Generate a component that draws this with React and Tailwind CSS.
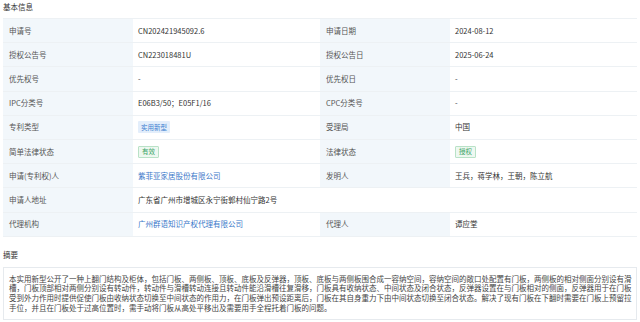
import React from "react";

const font = { fontFamily: '"Noto Sans CJK SC", "Noto Sans", sans-serif' };

function Tag({ children, kind }) {
  if (kind === "blue")
    return (
      <span className="inline-flex items-center h-[12px] px-[3px] text-[6.5px] leading-none bg-[#e3eefb] text-[#3f7fd0] rounded-[1px]">
        {children}
      </span>
    );
  return (
    <span className="inline-flex items-center h-[12px] px-[3px] text-[6.5px] leading-none bg-[#eef8f1] text-[#3aa365] border border-[#b9e2c7] rounded-[1px]">
      {children}
    </span>
  );
}

function Label({ children }) {
  return (
    <div className="w-[130px] shrink-0 bg-[#f2f7fb] flex items-center pl-[6px] text-[#555]">
      {children}
    </div>
  );
}

function Value({ children, wide }) {
  return (
    <div className={`${wide ? "flex-1" : "w-[187px] shrink-0"} flex items-center pl-[5px] text-[#333]`}>
      {children}
    </div>
  );
}

const Link = ({ children }) => <span className="text-[#3a78c9]">{children}</span>;

const rows = [
  ["申请号", "CN202421945092.6", "申请日期", "2024-08-12"],
  ["授权公告号", "CN223018481U", "授权公告日", "2025-06-24"],
  ["优先权号", "-", "优先权日", "-"],
  ["IPC分类号", "E06B3/50；E05F1/16", "CPC分类号", "-"],
  ["专利类型", <Tag kind="blue">实用新型</Tag>, "受理局", "中国"],
  ["简单法律状态", <Tag>有效</Tag>, "法律状态", <Tag>授权</Tag>],
  ["申请(专利权)人", <Link>紫菲亚家居股份有限公司</Link>, "发明人", "王兵，蒋学林，王朝，陈立航"],
  ["申请人地址", "广东省广州市增城区永宁街郭村仙宁路2号", null, null],
  ["代理机构", <Link>广州群语知识产权代理有限公司</Link>, "代理人", "谭应堂"],
];

export default function App() {
  return (
    <div className="w-[640px] h-[322px] overflow-hidden bg-white text-[7.5px] leading-[9.7px]" style={font}>
      <div className="pl-[3px] pt-[2px] h-[18px] text-[#333]">基本信息</div>
      <div className="ml-[3px] w-[634px] border-t border-[#edf1f4]">
        {rows.map((r, i) => (
          <div key={i} className="flex h-[24.2px] border-b border-[#edf1f4]">
            <Label>{r[0]}</Label>
            {r[2] === null ? (
              <Value wide>{r[1]}</Value>
            ) : (
              <>
                <Value>{r[1]}</Value>
                <Label>{r[2]}</Label>
                <Value wide>{r[3]}</Value>
              </>
            )}
          </div>
        ))}
      </div>
      <div className="pl-[3px] pt-[13px] h-[30px] text-[#333]">摘要</div>
      <div className="ml-[3px] w-[634px] border border-[#e6eaee] pl-[5px] pr-[2px] pt-[6px] pb-[6px] text-[#444]">
        本实用新型公开了一种上翻门结构及柜体，包括门板、两侧板、顶板、底板及反弹器，顶板、底板与两侧板围合成一容纳空间，容纳空间的敞口处配置有门板，两侧板的相对侧面分别设有滑槽，门板顶部相对两侧分别设有转动件，转动件与滑槽转动连接且转动件能沿滑槽往复滑移，门板具有收纳状态、中间状态及闭合状态，反弹器设置在与门板相对的侧面，反弹器用于在门板受到外力作用时提供促使门板由收纳状态切换至中间状态的作用力，在门板弹出预设距离后，门板在其自身重力下由中间状态切换至闭合状态。解决了现有门板在下翻时需要在门板上预留拉手位，并且在门板处于过高位置时，需手动将门板从高处平移出及需要用手全程托着门板的问题。
      </div>
    </div>
  );
}
